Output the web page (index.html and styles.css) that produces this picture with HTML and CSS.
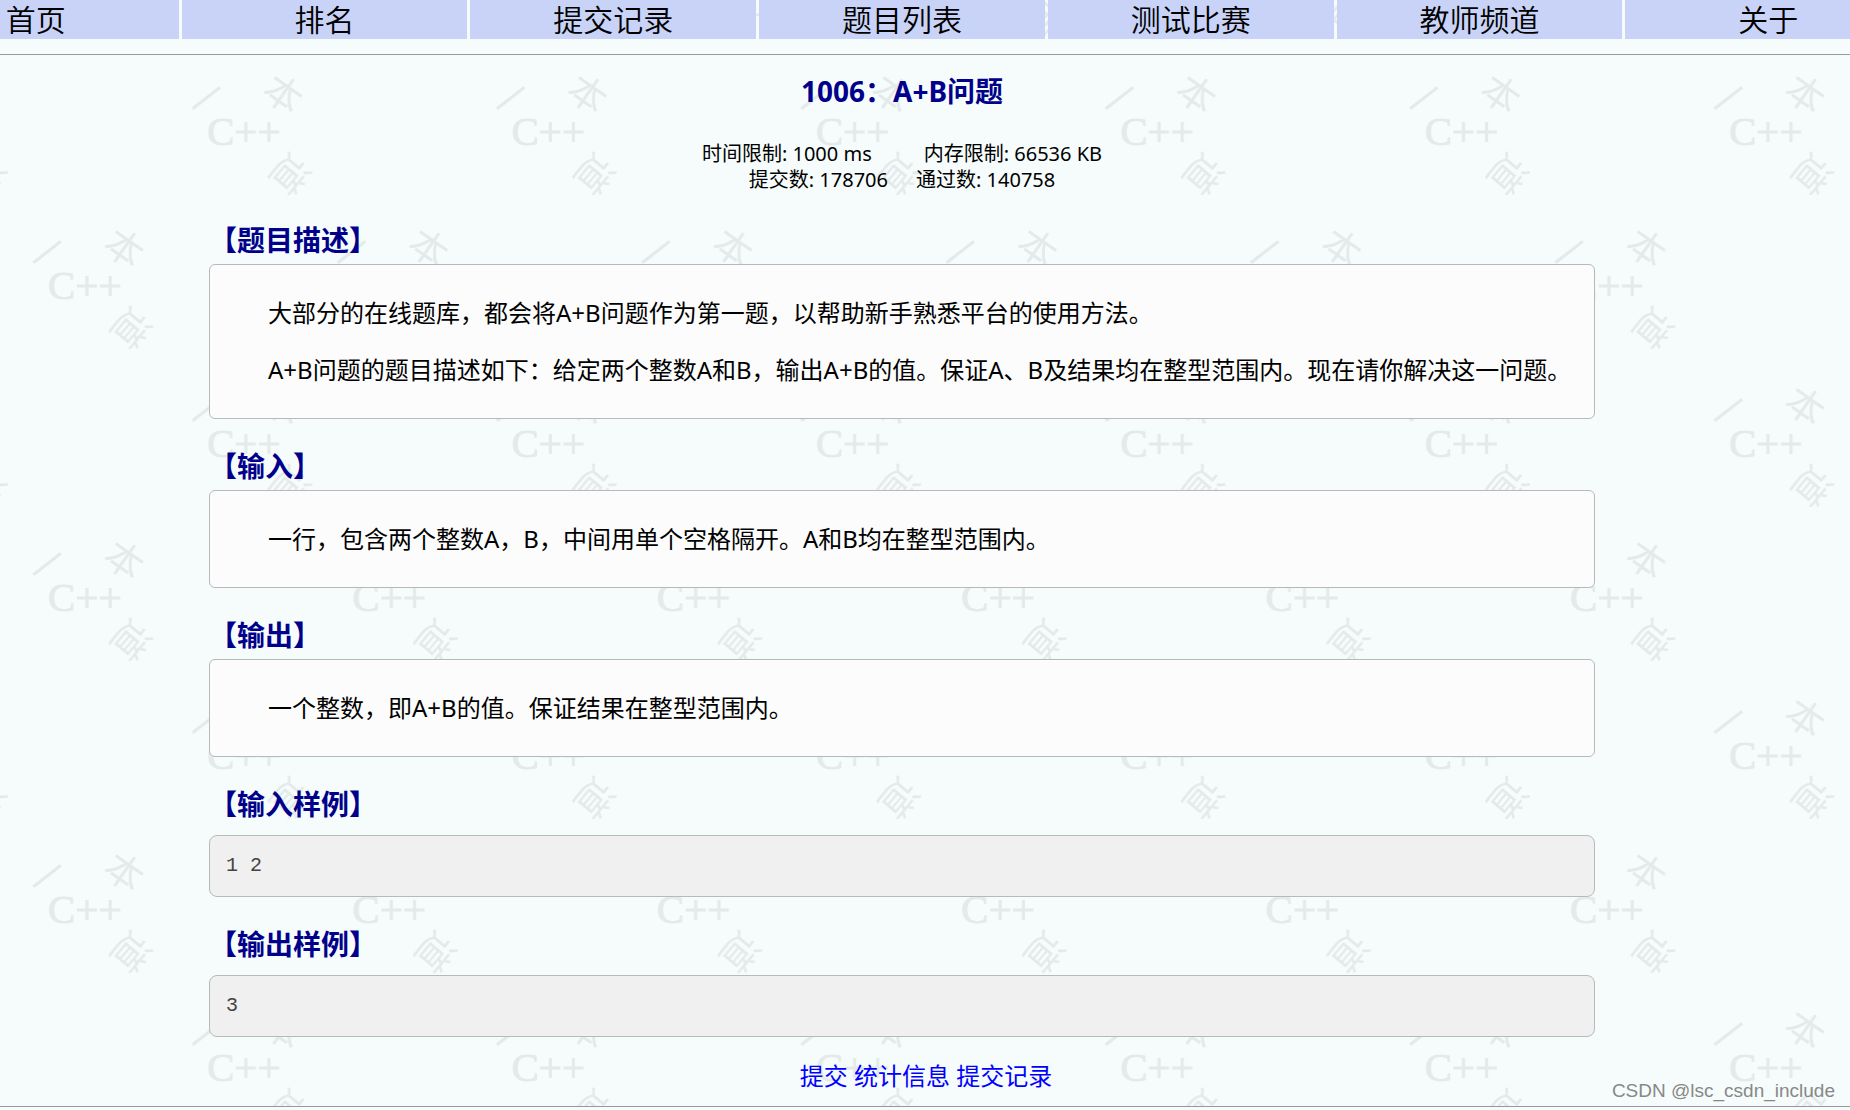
FILE: index.html
```html
<!DOCTYPE html>
<html lang="zh-CN">
<head>
    <meta charset="UTF-8">
    <meta name="viewport" content="width=device-width, initial-scale=1.0">
    <title>1006：A+B问题</title>
    <link rel="stylesheet" href="styles.css">
</head>
<body>
    <svg class="watermark" aria-hidden="true">
        <defs>
            <g id="mark">
                <text class="mark-latin" x="0" y="14">C++</text>
                <text class="mark-cjk" transform="translate(-1 -33) rotate(-38)" x="-19" y="15">一</text>
                <text class="mark-cjk" transform="translate(77 -38) rotate(35)" x="-19" y="15">本</text>
                <text class="mark-cjk" transform="translate(84 44) rotate(130)" x="-19" y="15">道</text>
            </g>
            <pattern id="tile" width="304.4" height="312" patternUnits="userSpaceOnUse">
                <use href="#mark" x="207" y="131"/>
                <use href="#mark" x="-97.4" y="131"/>
                <use href="#mark" x="48" y="285"/>
                <use href="#mark" x="48" y="-27"/>
            </pattern>
        </defs>
        <rect width="100%" height="100%" fill="url(#tile)"/>
    </svg>

    <div class="page">
        <nav class="menu">
            <a href="#">首页</a>
            <a href="#">排名</a>
            <a href="#">提交记录</a>
            <a href="#">题目列表</a>
            <a href="#">测试比赛</a>
            <a href="#">教师频道</a>
            <a href="#">关于</a>
        </nav>
        <hr>

        <main class="problem">
            <h1>1006：A+B问题</h1>
            <div class="limits">
                <div class="limit-row wide"><span>时间限制: 1000 ms</span><span>内存限制: 66536 KB</span></div>
                <div class="limit-row"><span>提交数: 178706</span><span>通过数: 140758</span></div>
            </div>

            <h2>【题目描述】</h2>
            <div class="panel">
                <p>大部分的在线题库，都会将A+B问题作为第一题，以帮助新手熟悉平台的使用方法。</p>
                <p>A+B问题的题目描述如下：给定两个整数A和B，输出A+B的值。保证A、B及结果均在整型范围内。现在请你解决这一问题。</p>
            </div>

            <h2>【输入】</h2>
            <div class="panel">
                <p>一行，包含两个整数A，B，中间用单个空格隔开。A和B均在整型范围内。</p>
            </div>

            <h2>【输出】</h2>
            <div class="panel">
                <p>一个整数，即A+B的值。保证结果在整型范围内。</p>
            </div>

            <h2>【输入样例】</h2>
            <pre>1 2</pre>

            <h2>【输出样例】</h2>
            <pre>3</pre>

            <p class="actions">
                <a href="#">提交</a>
                <a href="#">统计信息</a>
                <a href="#">提交记录</a>
            </p>
        </main>
        <hr>
    </div>

    <div class="credit">CSDN @lsc_csdn_include</div>
</body>
</html>
```
FILE: styles.css
```css
body {
    position: relative;
    margin: 0;
    overflow: hidden;
    background: #f5fcfb;
    color: #000;
    font-family: "Noto Sans", "Noto Sans CJK SC", sans-serif;
    font-size: 24px;
    line-height: 33px;
}

.watermark {
    position: absolute;
    top: 0;
    left: 0;
    z-index: -1;
    width: 100%;
    height: 100%;
    fill: #e4eae9;
}

.mark-latin {
    font-family: "Liberation Serif", serif;
    font-size: 41px;
    stroke: #e4eae9;
    stroke-width: 1px;
}

.mark-cjk {
    font-family: "Noto Sans CJK SC", sans-serif;
    font-size: 38px;
}

/* the page is wider than the window and runs off both sides */
.page {
    margin: 0 -61px 0 -107px;
}

.menu {
    display: grid;
    grid-template-columns: repeat(7, 1fr);
    gap: 3px;
    margin-bottom: 15px;
}

.menu a {
    background: #c8d3f7;
    color: #000;
    font-size: 30px;
    font-weight: 350;
    line-height: 39px;
    text-align: center;
    text-decoration: none;
}

hr {
    margin: 0;
    border: 0;
    border-top: 1px solid #999;
}

.problem {
    padding: 0 316px;
}

h1,
h2 {
    color: #00008b;
    font-size: 28px;
    font-weight: bold;
    line-height: 37px;
}

h1 {
    margin: 18px 0 31px;
    text-align: center;
}

h2 {
    margin: 29px 0 5px;
}

p {
    margin: 24px 0;
    text-indent: 2em;
}

.limits {
    font-size: 20px;
    line-height: 26px;
}

.limit-row {
    display: flex;
    justify-content: center;
    gap: 28px;
}

.limit-row.wide {
    gap: 52px;
}

.panel {
    padding: 7px 10px 8px;
    border: 1px solid #b5babb;
    border-radius: 6px;
    background: #fcfcfc;
}

pre {
    margin: 12px 0 0;
    padding: 18px 16px;
    border: 1px solid #b5babb;
    border-radius: 8px;
    background: #f0f0f0;
    color: #444;
    font-family: "Liberation Mono", monospace;
    font-size: 20px;
    line-height: 24px;
}

.actions {
    margin: 22px 0 14px;
    text-align: center;
}

.actions a {
    color: #00f;
    text-decoration: none;
}

.credit {
    position: absolute;
    right: 15px;
    bottom: 2px;
    color: #888;
    font-family: "Liberation Sans", sans-serif;
    font-size: 19px;
    line-height: 28px;
}
```
